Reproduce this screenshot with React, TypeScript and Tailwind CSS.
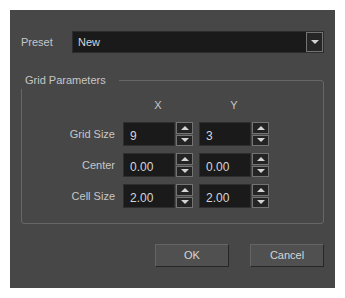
import { ReactNode } from "react"

const font = { fontFamily: '"Liberation Sans", Arial, sans-serif' }

function Arrow({ up }: { up?: boolean }) {
  return (
    <svg width="8" height="4" viewBox="0 0 8 4" className="block">
      {up ? <polygon points="0,4 8,4 4,0" fill="#d4d4d4" /> : <polygon points="0,0 8,0 4,4" fill="#d4d4d4" />}
    </svg>
  )
}

function SpinField({ value }: { value: string }) {
  return (
    <div className="flex h-[24px] w-[70px]">
      <div className="flex flex-1 items-center border border-[#2e2e2e] bg-[#1a1a1a] pl-[6px] pt-[3px] text-[12px] text-[#d3d6da]">
        {value}
      </div>
      <div className="ml-[1px] flex w-[17px] flex-col gap-[1px]">
        <div className="flex flex-1 items-center justify-center border border-[#737373] bg-[#242424]">
          <Arrow up />
        </div>
        <div className="flex flex-1 items-center justify-center border border-[#737373] bg-[#242424]">
          <Arrow />
        </div>
      </div>
    </div>
  )
}

function Row({ label, x, y }: { label: string; x: string; y: string }) {
  return (
    <div className="flex items-center">
      <div className="w-[94px] pr-[1px] text-right text-[11px] text-[#c6c6c6]">{label}</div>
      <div className="ml-[7px] flex gap-[6px]">
        <SpinField value={x} />
        <SpinField value={y} />
      </div>
    </div>
  )
}

function Btn({ children }: { children: ReactNode }) {
  return (
    <button className="flex h-[23px] w-[74px] items-center justify-center border border-t-[#646464] border-l-[#646464] border-b-[#262626] border-r-[#262626] bg-[#505050] text-[11px] text-[#d6d6d6]">
      {children}
    </button>
  )
}

export default function App() {
  return (
    <div className="h-[298px] w-[345px] bg-white p-[10px]" style={font}>
      <div className="flex h-[278px] w-[325px] flex-col bg-[#474747] px-[11px] pt-[21px]">
        {/* Preset */}
        <div className="flex h-[22px] items-center">
          <div className="w-[51px] text-[11px] text-[#c6c6c6]">Preset</div>
          <div className="flex h-full flex-1 border border-[#2c2c2c] bg-[#1a1a1a]">
            <div className="flex flex-1 items-center pl-[5px] pt-[1px] text-[11px] text-[#d3d6da]">New</div>
            <div className="flex w-[17px] items-center justify-center border border-[#737373] bg-[#262626]">
              <Arrow />
            </div>
          </div>
        </div>

        {/* Grid Parameters */}
        <div className="relative mt-[27px] rounded-[3px] border border-[#676767] pb-[15px] pt-[17px]">
          <div className="absolute left-[-2px] top-[-8px] bg-[#474747] pl-[5px] pr-[13px] pb-[2px] text-[11px] leading-[14px] text-[#c6c6c6]">
            Grid Parameters
          </div>
          <div className="ml-[101px] flex h-[14px] gap-[6px] text-[11px] leading-[14px] text-[#c6c6c6]">
            <div className="w-[70px] text-center">X</div>
            <div className="w-[70px] text-center">Y</div>
          </div>
          <div className="mt-[10px] flex flex-col gap-[7px]">
            <Row label="Grid Size" x="9" y="3" />
            <Row label="Center" x="0.00" y="0.00" />
            <Row label="Cell Size" x="2.00" y="2.00" />
          </div>
        </div>

        {/* Buttons */}
        <div className="mt-[20px] flex justify-end gap-[21px]">
          <Btn>OK</Btn>
          <Btn>Cancel</Btn>
        </div>
      </div>
    </div>
  )
}
